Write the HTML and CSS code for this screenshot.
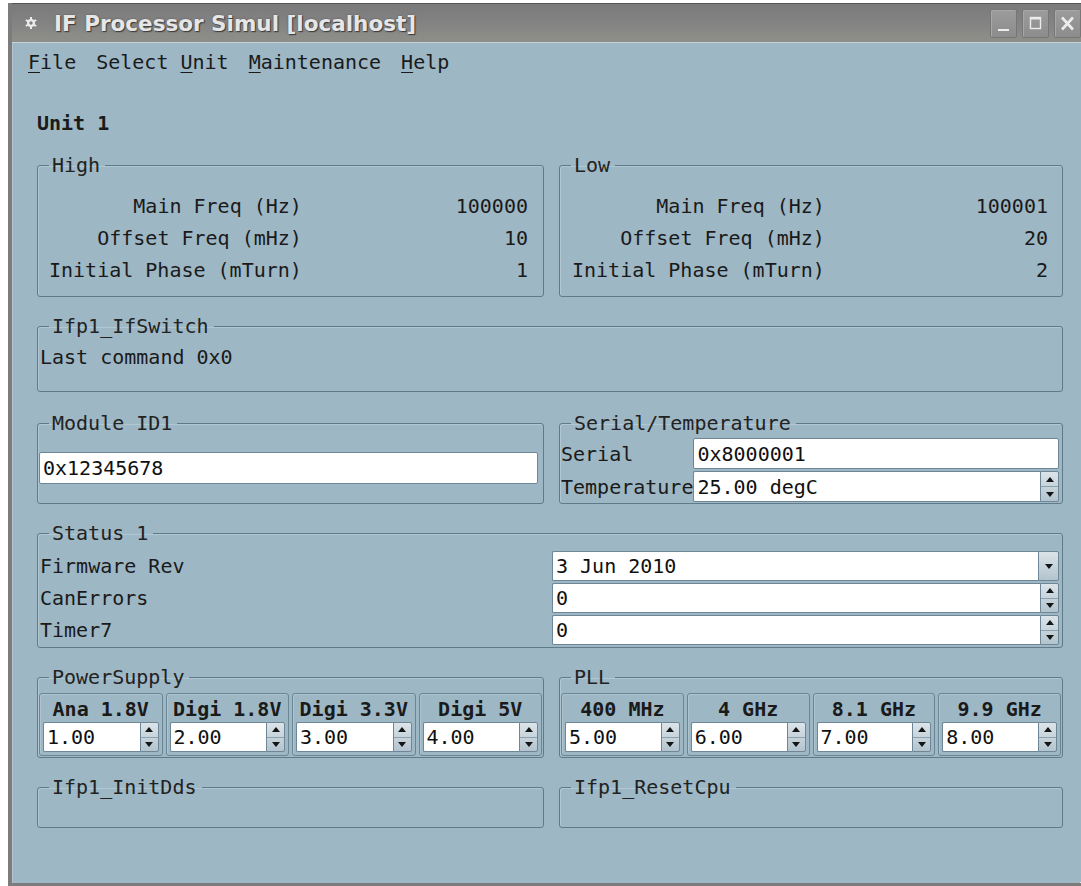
FILE: index.html
```html
<!DOCTYPE html>
<html lang="en">
<head>
<meta charset="utf-8">
<title>IF Processor Simul [localhost]</title>
<link rel="stylesheet" href="styles.css">
</head>
<body>
<div class="window">
  <header class="titlebar">
    <svg class="app-icon" width="12" height="12" viewBox="0 0 12 12">
      <g fill="#ececec">
        <rect x="5" y="0" width="2" height="12"/>
        <rect x="5" y="0" width="2" height="12" transform="rotate(60 6 6)"/>
        <rect x="5" y="0" width="2" height="12" transform="rotate(120 6 6)"/>
        <circle cx="6" cy="6" r="4"/>
      </g>
      <circle cx="6" cy="6" r="1.7" fill="#808080"/>
    </svg>
    <span class="title">IF Processor Simul [localhost]</span>
    <div class="wm-buttons">
      <span class="wm-btn"><svg width="27" height="29" viewBox="0 0 27 29"><rect x="8" y="20" width="11" height="2" fill="#ececec"/></svg></span>
      <span class="wm-btn"><svg width="27" height="29" viewBox="0 0 27 29"><rect x="8.5" y="8.5" width="10" height="11" fill="none" stroke="#ececec" stroke-width="1.4"/><rect x="8.5" y="8.5" width="10" height="2" fill="#ececec"/></svg></span>
      <span class="wm-btn"><svg width="27" height="29" viewBox="0 0 27 29"><path d="M8 8.5 L19 20.5 M19 8.5 L8 20.5" stroke="#ececec" stroke-width="2.6"/></svg></span>
    </div>
  </header>

  <nav class="menubar">
    <span class="menu-item"><u>F</u>ile</span>
    <span class="menu-item">Select <u>U</u>nit</span>
    <span class="menu-item"><u>M</u>aintenance</span>
    <span class="menu-item"><u>H</u>elp</span>
  </nav>

  <main class="client">
    <div class="unit-title">Unit 1</div>

    <div class="pair first">
      <fieldset class="group">
        <legend>High</legend>
        <div class="freq-body">
          <span class="lbl">Main Freq (Hz)</span><span class="val">100000</span>
          <span class="lbl">Offset Freq (mHz)</span><span class="val">10</span>
          <span class="lbl">Initial Phase (mTurn)</span><span class="val">1</span>
        </div>
      </fieldset>
      <fieldset class="group">
        <legend>Low</legend>
        <div class="freq-body low">
          <span class="lbl">Main Freq (Hz)</span><span class="val">100001</span>
          <span class="lbl">Offset Freq (mHz)</span><span class="val">20</span>
          <span class="lbl">Initial Phase (mTurn)</span><span class="val">2</span>
        </div>
      </fieldset>
    </div>

    <fieldset class="group section">
      <legend>Ifp1_IfSwitch</legend>
      <div class="switch-body">Last command 0x0</div>
    </fieldset>

    <div class="pair section-wide">
      <fieldset class="group">
        <legend>Module ID1</legend>
        <div class="module-body">
          <div class="line-edit"><span class="field">0x12345678</span></div>
        </div>
      </fieldset>
      <fieldset class="group">
        <legend>Serial/Temperature</legend>
        <div class="serial-body">
          <span class="lbl">Serial</span>
          <div class="line-edit"><span class="field">0x8000001</span></div>
          <span class="lbl">Temperature</span>
          <div class="spin"><span class="field">25.00 degC</span><span class="spin-btns"><i class="up"></i><i class="down"></i></span></div>
        </div>
      </fieldset>
    </div>

    <fieldset class="group section">
      <legend>Status 1</legend>
      <div class="status-body">
        <span class="lbl">Firmware Rev</span>
        <div class="combo"><span class="field">3 Jun 2010</span><span class="drop-btn"><i class="down"></i></span></div>
        <span class="lbl">CanErrors</span>
        <div class="spin"><span class="field">0</span><span class="spin-btns"><i class="up"></i><i class="down"></i></span></div>
        <span class="lbl">Timer7</span>
        <div class="spin"><span class="field">0</span><span class="spin-btns"><i class="up"></i><i class="down"></i></span></div>
      </div>
    </fieldset>

    <div class="pair section">
      <fieldset class="group">
        <legend>PowerSupply</legend>
        <div class="cells">
          <div class="cell"><div class="cell-head">Ana 1.8V</div><div class="spin"><span class="field">1.00</span><span class="spin-btns"><i class="up"></i><i class="down"></i></span></div></div>
          <div class="cell"><div class="cell-head">Digi 1.8V</div><div class="spin"><span class="field">2.00</span><span class="spin-btns"><i class="up"></i><i class="down"></i></span></div></div>
          <div class="cell"><div class="cell-head">Digi 3.3V</div><div class="spin"><span class="field">3.00</span><span class="spin-btns"><i class="up"></i><i class="down"></i></span></div></div>
          <div class="cell"><div class="cell-head">Digi 5V</div><div class="spin"><span class="field">4.00</span><span class="spin-btns"><i class="up"></i><i class="down"></i></span></div></div>
        </div>
      </fieldset>
      <fieldset class="group">
        <legend>PLL</legend>
        <div class="cells">
          <div class="cell"><div class="cell-head">400 MHz</div><div class="spin"><span class="field">5.00</span><span class="spin-btns"><i class="up"></i><i class="down"></i></span></div></div>
          <div class="cell"><div class="cell-head">4 GHz</div><div class="spin"><span class="field">6.00</span><span class="spin-btns"><i class="up"></i><i class="down"></i></span></div></div>
          <div class="cell"><div class="cell-head">8.1 GHz</div><div class="spin"><span class="field">7.00</span><span class="spin-btns"><i class="up"></i><i class="down"></i></span></div></div>
          <div class="cell"><div class="cell-head">9.9 GHz</div><div class="spin"><span class="field">8.00</span><span class="spin-btns"><i class="up"></i><i class="down"></i></span></div></div>
        </div>
      </fieldset>
    </div>

    <div class="pair section">
      <fieldset class="group">
        <legend>Ifp1_InitDds</legend>
        <div class="empty-body"></div>
      </fieldset>
      <fieldset class="group">
        <legend>Ifp1_ResetCpu</legend>
        <div class="empty-body"></div>
      </fieldset>
    </div>
  </main>
  <span class="size-grip"></span>
</div>
</body>
</html>
```

FILE: styles.css
```css
html, body {
  margin: 0;
  padding: 0;
  height: 100%;
  overflow: hidden;
  background: #ffffff;
}

body {
  font-family: "DejaVu Sans Mono", "Liberation Mono", monospace;
  font-size: 20px;
  color: #1a1a1a;
}

/* ---- window frame ---- */
.window {
  position: relative;
  box-sizing: border-box;
  margin: 3px 0 0 8px;
  width: 1080px;
  height: 883px;
  border-left: 4px solid #7c7c7c;
  border-bottom: 3px solid #7c7c7c;
  background: #9db7c5;
  display: flex;
  flex-direction: column;
  box-shadow: inset 1px 0 0 #b4c4cc;
}

.titlebar {
  box-sizing: border-box;
  height: 40px;
  flex: none;
  display: flex;
  align-items: center;
  border-top: 1px solid #555;
  border-bottom: 1px solid #c3d3db;
  background: linear-gradient(#7a7a7a, #838383 50%, #8f8f89);
}

.app-icon {
  margin-left: 13px;
  flex: none;
}

.title {
  margin-left: 17px;
  font-family: "DejaVu Sans", sans-serif;
  font-weight: bold;
  font-size: 21.5px;
  color: #e6e6e6;
  text-shadow: 1px 1px 1px #3a3a3a, 0 0 2px #555;
  white-space: nowrap;
}

.wm-buttons {
  margin-left: auto;
  margin-right: 7px;
  display: flex;
  gap: 5px;
}

.wm-btn {
  box-sizing: border-box;
  width: 27px;
  height: 29px;
  display: flex;
  border: 1px solid #767676;
  border-radius: 2px;
  background: linear-gradient(#9c9c9c, #8c8c8c);
  box-shadow: inset 1px 1px 0 #a8a8a8;
}

.wm-btn svg {
  margin: -1px;
}

/* ---- menu ---- */
.menubar {
  flex: none;
  display: flex;
  gap: 20px;
  padding: 9px 16px;
  line-height: 20px;
}

.menu-item u {
  text-decoration-thickness: 1px;
  text-underline-offset: 3px;
}

/* ---- client area ---- */
.client {
  padding: 32px 0 0 25px;
  width: 1026px;
}

.unit-title {
  font-weight: bold;
  line-height: 20px;
}

.group {
  margin: 0;
  padding: 0;
  min-width: 0;
  border: 1px solid #5f7a89;
  border-radius: 3px;
  box-shadow: inset 1px 1px 0 rgba(214, 228, 236, 0.35);
}

.group > legend {
  margin-left: 11px;
  padding: 0 5px 0 3px;
  line-height: 20px;
  color: #222;
}

.pair {
  display: grid;
  grid-template-columns: 507px 504px;
  column-gap: 15px;
}

/* vertical spacing between the stacked sections */
.client > .first {
  margin-top: 22px;
}

.client > .section {
  margin-top: 19px;
}

.client > .section-wide {
  margin-top: 21px;
}

/* High / Low */
.freq-body {
  display: grid;
  grid-template-columns: max-content 1fr;
  grid-auto-rows: 32px;
  align-items: center;
  padding: 15px 15px 10px 11px;
}

.freq-body.low {
  padding: 15px 14px 10px 12px;
}

.lbl {
  white-space: nowrap;
}

.freq-body .lbl,
.freq-body .val {
  text-align: right;
}

.switch-body {
  padding: 11px 2px 24px;
  line-height: 20px;
}

.module-body {
  height: 70px;
  box-sizing: border-box;
  display: flex;
  align-items: center;
  padding: 0 5px 0 1px;
}

.module-body .line-edit {
  flex: 1;
  height: 32px;
}

.serial-body {
  display: grid;
  grid-template-columns: max-content 1fr;
  grid-auto-rows: 31px;
  row-gap: 2px;
  align-items: center;
  padding: 5px 3px 1px 1px;
}

.status-body {
  display: grid;
  grid-template-columns: 512px 1fr;
  grid-auto-rows: 30px;
  row-gap: 2px;
  align-items: center;
  padding: 8px 3px 2px 2px;
}

/* ---- edit widgets ---- */
.line-edit,
.spin,
.combo {
  display: flex;
  height: 100%;
}

.field {
  flex: 1;
  min-width: 0;
  box-sizing: border-box;
  display: flex;
  align-items: center;
  background: #ffffff;
  border: 1px solid #6e8695;
  border-radius: 2px;
  padding-left: 3px;
  white-space: nowrap;
  overflow: hidden;
  color: #101010;
}

.spin .field,
.combo .field {
  border-right: none;
  border-radius: 2px 0 0 2px;
}

.spin-btns,
.drop-btn {
  flex: none;
  box-sizing: border-box;
  width: 19px;
  display: flex;
  flex-direction: column;
  border: 1px solid #6e8695;
  border-radius: 0 2px 2px 0;
  background: linear-gradient(#dbe4e9, #b3c4ce);
}

.drop-btn {
  width: 21px;
}

.spin-btns i,
.drop-btn i {
  flex: 1;
  display: flex;
  align-items: center;
  justify-content: center;
}

.spin-btns i + i {
  border-top: 1px solid #8ca2af;
}

.spin-btns i::before,
.drop-btn i::before {
  content: "";
  border-left: 4px solid transparent;
  border-right: 4px solid transparent;
}

.up::before {
  border-bottom: 5px solid #151515;
}

.down::before {
  border-top: 5px solid #151515;
}

/* ---- PowerSupply / PLL cells ---- */
.cells {
  display: grid;
  grid-template-columns: repeat(4, 1fr);
  column-gap: 3px;
  padding: 6px 1px 1px 1px;
}

.cell {
  box-sizing: border-box;
  height: 63px;
  border: 1px solid #6a8594;
  border-radius: 3px;
  padding: 5px 3px 3px;
  display: flex;
  flex-direction: column;
  box-shadow: inset 1px 1px 0 rgba(214, 228, 236, 0.3);
}

.cell-head {
  font-weight: bold;
  text-align: center;
  line-height: 20px;
  white-space: nowrap;
}

.cell .spin {
  margin-top: 3px;
  height: 30px;
}

.empty-body {
  height: 30px;
}

/* corner grip drawn over the frame */
.size-grip {
  position: absolute;
  right: 0;
  bottom: 0;
  width: 8px;
  height: 8px;
  background: linear-gradient(135deg, transparent 45%, #e2e9ed 45%, #e2e9ed 55%, transparent 55%, transparent 70%, #e2e9ed 70%, #e2e9ed 80%, transparent 80%);
}
```
